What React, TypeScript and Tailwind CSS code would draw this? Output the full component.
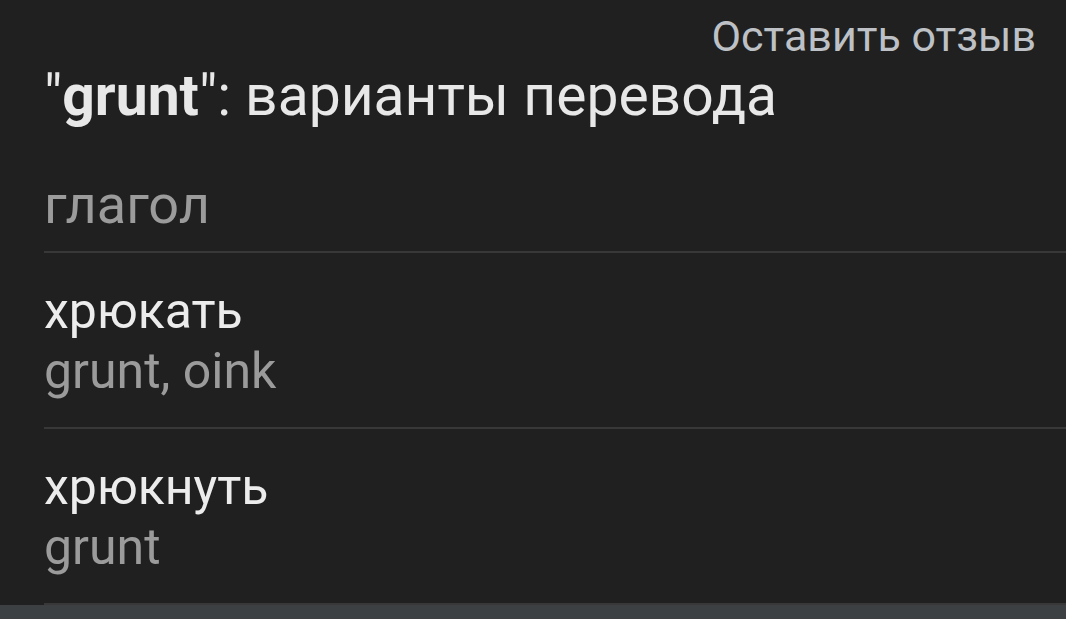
import React from "react";

const rows = [
  { ru: "хрюкать", en: "grunt, oink" },
  { ru: "хрюкнуть", en: "grunt" },
];

export default function App() {
  return (
    <div
      className="w-[1066px] h-[619px] overflow-hidden bg-[#202020] flex flex-col"
      style={{ fontFamily: "Roboto, 'Noto Sans', sans-serif" }}
    >
      <div className="flex justify-end pr-[30px] pt-[10px] h-[60px]">
        <span className="text-[43px] leading-[52px] text-[#bdc1c6]">Оставить отзыв</span>
      </div>
      <div className="pl-[44px] h-[72px] flex items-center">
        <h1 className="text-[57px] leading-[64px] text-[#e8e8e8] whitespace-nowrap">
          "<b className="font-bold">grunt</b>": варианты перевода
        </h1>
      </div>
      <div className="pl-[44px] flex-1 flex flex-col">
        <div className="h-[122px] flex flex-col justify-end border-b-2 border-[#383838] pb-[14px]">
          <span className="text-[54px] leading-[64px] text-[#9b9b9b]">глагол</span>
        </div>
        {rows.map((r) => (
          <div
            key={r.ru}
            className="h-[176px] flex flex-col pt-[28px] border-b-2 border-[#383838]"
          >
            <span className="text-[50px] leading-[60px] text-[#ececec]">{r.ru}</span>
            <span className="text-[50px] leading-[60px] text-[#9b9b9b]">{r.en}</span>
          </div>
        ))}
      </div>
      <div className="h-[14px] bg-[#3c4043] shrink-0" />
    </div>
  );
}
